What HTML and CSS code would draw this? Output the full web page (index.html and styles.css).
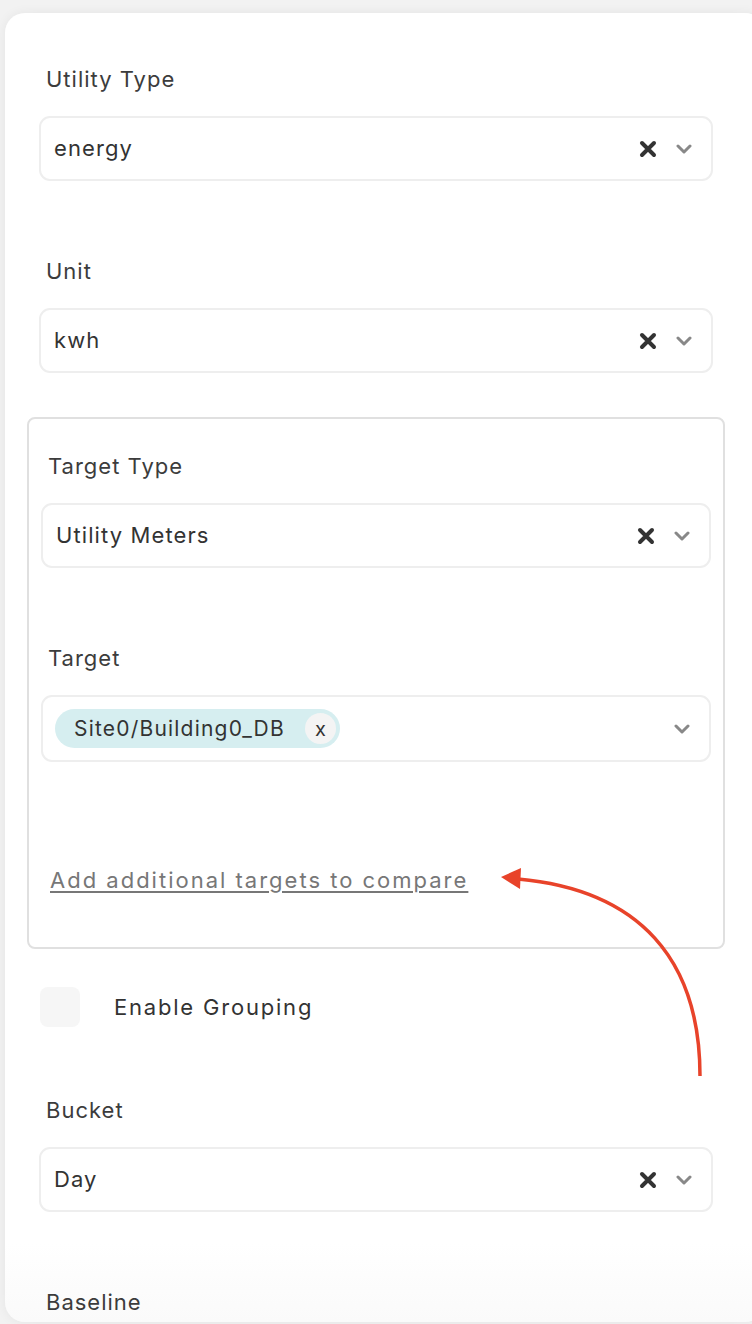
FILE: index.html
```html
<!DOCTYPE html>
<html lang="en">
<head>
<meta charset="utf-8">
<title>Utility form</title>
<link rel="stylesheet" href="styles.css">
</head>
<body>
<div class="card">
  <div class="field">
    <div class="label">Utility Type</div>
    <div class="select">
      <span class="value">energy</span>
      <span class="icons">
        <svg class="clear" width="18" height="18" viewBox="0 0 18 18"><path d="M3 3 L15 15 M15 3 L3 15" stroke="#333" stroke-width="4" stroke-linecap="round"/></svg>
        <svg class="chev" width="16" height="10" viewBox="0 0 16 10"><path d="M2 2 L8 8 L14 2" fill="none" stroke="#888" stroke-width="3" stroke-linecap="round" stroke-linejoin="round"/></svg>
      </span>
    </div>
  </div>

  <div class="field">
    <div class="label">Unit</div>
    <div class="select">
      <span class="value">kwh</span>
      <span class="icons">
        <svg class="clear" width="18" height="18" viewBox="0 0 18 18"><path d="M3 3 L15 15 M15 3 L3 15" stroke="#333" stroke-width="4" stroke-linecap="round"/></svg>
        <svg class="chev" width="16" height="10" viewBox="0 0 16 10"><path d="M2 2 L8 8 L14 2" fill="none" stroke="#888" stroke-width="3" stroke-linecap="round" stroke-linejoin="round"/></svg>
      </span>
    </div>
  </div>

  <div class="target-box">
    <div class="field">
      <div class="label">Target Type</div>
      <div class="select">
        <span class="value">Utility Meters</span>
        <span class="icons">
          <svg class="clear" width="18" height="18" viewBox="0 0 18 18"><path d="M3 3 L15 15 M15 3 L3 15" stroke="#333" stroke-width="4" stroke-linecap="round"/></svg>
          <svg class="chev" width="16" height="10" viewBox="0 0 16 10"><path d="M2 2 L8 8 L14 2" fill="none" stroke="#888" stroke-width="3" stroke-linecap="round" stroke-linejoin="round"/></svg>
        </span>
      </div>
    </div>

    <div class="field">
      <div class="label">Target</div>
      <div class="select multi">
        <span class="chip">
          <span class="chip-text">Site0/Building0_DB</span>
          <span class="chip-x">x</span>
        </span>
        <span class="icons">
          <svg class="chev" width="16" height="10" viewBox="0 0 16 10"><path d="M2 2 L8 8 L14 2" fill="none" stroke="#888" stroke-width="3" stroke-linecap="round" stroke-linejoin="round"/></svg>
        </span>
      </div>
    </div>

    <a class="add-link" href="#">Add additional targets to compare</a>
  </div>

  <label class="check-row">
    <span class="checkbox"></span>
    <span class="check-label">Enable Grouping</span>
  </label>

  <div class="field bucket">
    <div class="label">Bucket</div>
    <div class="select">
      <span class="value">Day</span>
      <span class="icons">
        <svg class="clear" width="18" height="18" viewBox="0 0 18 18"><path d="M3 3 L15 15 M15 3 L3 15" stroke="#333" stroke-width="4" stroke-linecap="round"/></svg>
        <svg class="chev" width="16" height="10" viewBox="0 0 16 10"><path d="M2 2 L8 8 L14 2" fill="none" stroke="#888" stroke-width="3" stroke-linecap="round" stroke-linejoin="round"/></svg>
      </span>
    </div>
  </div>

  <div class="field">
    <div class="label">Baseline</div>
  </div>
</div>

<svg class="annotation" width="752" height="1324" viewBox="0 0 752 1324">
  <path d="M700 1076 C700 960 640 890 518 879" fill="none" stroke="#e8432a" stroke-width="3.5"/>
  <path d="M501 877 L521 868 L520 889 Z" fill="#e8432a"/>
</svg>
</body>
</html>
```

FILE: styles.css
```css
html, body {
  margin: 0;
  padding: 0;
}

body {
  width: 752px;
  height: 1324px;
  overflow: hidden;
  background: #f2f2f2;
  font-family: "Inter", "Roboto", "DejaVu Sans", sans-serif;
  color: #3a3a3a;
  position: relative;
}

.card {
  margin: 13px 0 0 5px;
  width: 760px;
  height: 1309px;
  box-sizing: border-box;
  background: linear-gradient(to bottom, #ffffff 0, #ffffff 1230px, #fafafa 1309px);
  border-radius: 20px;
  box-shadow: 0 0 12px rgba(0, 0, 0, 0.06);
  padding: 51px 52px 0 34px;
  display: flex;
  flex-direction: column;
  align-items: flex-start;
}

.field {
  display: flex;
  flex-direction: column;
  gap: 22px;
  width: 674px;
}

.field + .field {
  margin-top: 75px;
}

.label {
  padding-left: 7px;
  font-size: 22px;
  line-height: 30px;
  letter-spacing: 1px;
  color: #3c3c3c;
}

.select {
  box-sizing: border-box;
  height: 65px;
  border: 2px solid #eeeeee;
  border-radius: 11px;
  padding: 0 19px 0 13px;
  display: flex;
  align-items: center;
  justify-content: space-between;
  background: #fff;
}

.value {
  font-size: 22px;
  letter-spacing: 1.1px;
  color: #333;
  margin-top: -2px;
}

.icons {
  display: flex;
  align-items: center;
  gap: 19px;
}

.target-box {
  margin: 44px 0 0 -12px;
  width: 698px;
  box-sizing: border-box;
  border: 2px solid #e0e0e0;
  border-radius: 8px;
  padding: 32px 12px 52px 12px;
  display: flex;
  flex-direction: column;
}

.target-box .field {
  width: 670px;
}

.select.multi {
  height: 67px;
  padding: 0 19px 0 12px;
}

.chip {
  display: flex;
  align-items: center;
  height: 39px;
  background: #d6eef0;
  border-radius: 20px;
  padding: 0 4px 0 19px;
  gap: 20px;
}

.chip-text {
  font-size: 21px;
  letter-spacing: 1.2px;
  color: #333;
}

.chip-x {
  width: 31px;
  height: 31px;
  border-radius: 50%;
  background: #f4f4f4;
  display: flex;
  align-items: center;
  justify-content: center;
  font-size: 20px;
  color: #333;
}

.add-link {
  margin-top: 103px;
  padding-left: 9px;
  font-size: 22px;
  line-height: 30px;
  letter-spacing: 2px;
  color: #777;
  text-decoration: underline;
  text-underline-offset: 3px;
  text-decoration-thickness: 1.5px;
  align-self: flex-start;
}

.check-row {
  margin-top: 38px;
  display: flex;
  align-items: center;
  gap: 34px;
  padding-left: 1px;
}

.checkbox {
  width: 40px;
  height: 40px;
  border-radius: 8px;
  background: #f6f6f6;
}

.check-label {
  font-size: 22px;
  letter-spacing: 1.8px;
  color: #333;
}

.field.bucket {
  margin-top: 68px;
}

.annotation {
  position: absolute;
  left: 0;
  top: 0;
  pointer-events: none;
}
```
